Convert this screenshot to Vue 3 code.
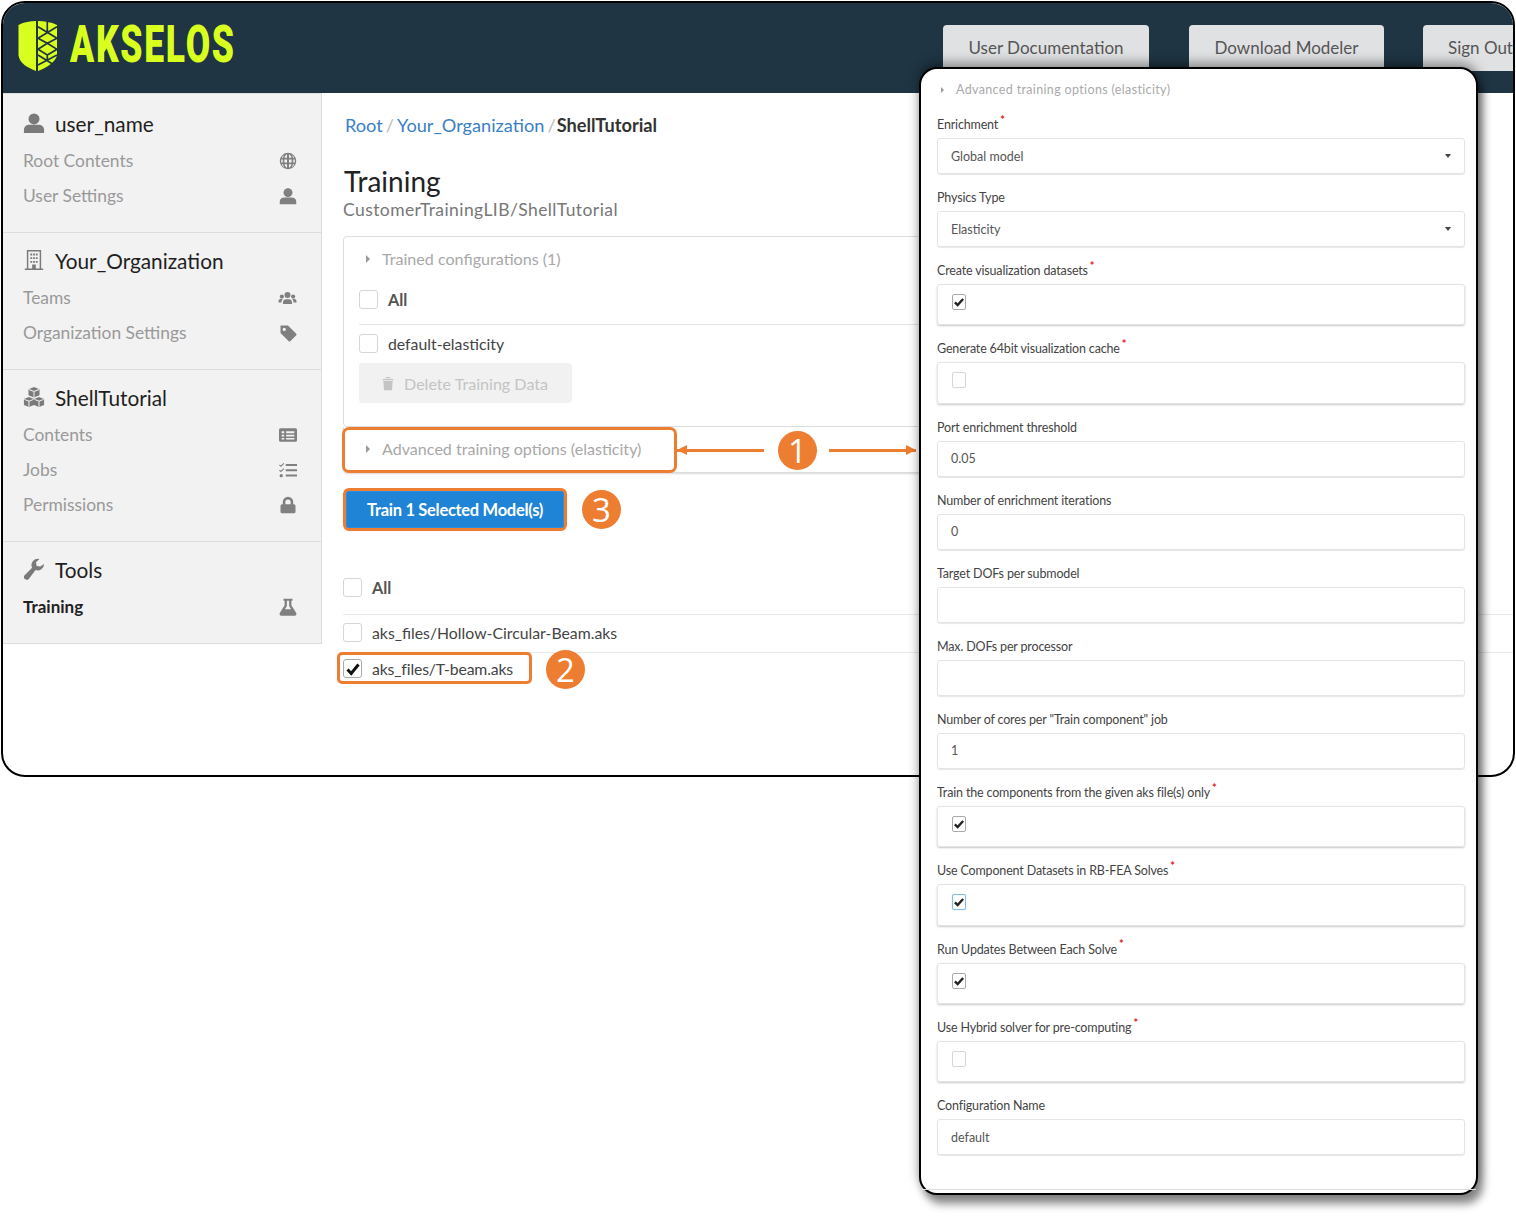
<template>
  <div class="page">
    <div class="frame">
      <header class="topbar">
        <div class="logo">
          <svg class="logo-mark" viewBox="0 0 40 52" width="40" height="52">
            <path fill="#d9ff1f" d="M0.500 5 C6 2 12 1 18 1 V51 C10 48 1 43 0.500 35 Z" />
            <path fill="#d9ff1f" d="M20 1 C26 1 33 2 39 5 V35 C38 42 28 48 20 51 Z" />
            <path fill="none" stroke="#1f3544" stroke-width="1.700" d="M29.300 1V12.500M20 6.700L39 18.300M39 6.700L20 18.300M20 18.300L29.300 23.300L39 18.300M20 29.300L29.300 23.300L39 29.300L29.300 35ZM20 35L39 46.700M39 35L20 45M29.300 35V41" />
          </svg>
          <span class="logo-text">AKSELOS</span>
        </div>
        <nav class="top-nav">
          <a class="top-btn docs">User Documentation</a>
          <a class="top-btn modeler">Download Modeler</a>
          <a class="top-btn signout">Sign Out</a>
        </nav>
      </header>
      <div class="body-row">
        <aside class="sidebar">
          <section v-for="sec in sections" :key="sec.title" class="side-sec">
            <div class="side-head">
              <svg class="head-ico" viewBox="0 0 24 24" v-html="icons[sec.icon]"></svg>
              <span>{{ sec.title }}</span>
            </div>
            <div v-for="it in sec.items" :key="it.label" class="side-item" :class="{ active: it.active }">
              <span>{{ it.label }}</span>
              <svg class="item-ico" :class="it.icon" viewBox="0 0 24 24" v-html="icons[it.icon]"></svg>
            </div>
          </section>
        </aside>
        <main class="content">
          <div class="crumbs">
            <a>Root</a><span class="sep">/</span><a>Your_Organization</a><span class="sep">/</span><b>ShellTutorial</b>
          </div>
          <h1>Training</h1>
          <div class="subtitle">CustomerTrainingLIB/ShellTutorial</div>

          <div class="box trained">
            <div class="acc-title"><i class="caret"></i>Trained configurations (1)</div>
            <div class="check-row all-row"><span class="cb"></span><span class="all">All</span></div>
            <div class="check-row"><span class="cb"></span><span>default-elasticity</span></div>
            <button class="delete-btn">
              <svg viewBox="0 0 24 24" width="16" height="18"><path fill="#c4c4c4" d="M4 6h16v2H4zM9 3h6l1 2H8zM5 9h14l-1 14H6z" /></svg>
              Delete Training Data
            </button>
          </div>
          <div class="box advanced">
            <div class="acc-title"><i class="caret"></i>Advanced training options (elasticity)</div>
            <span class="hl hl-adv"></span>
          </div>

          <div class="train-wrap">
            <button class="train-btn">Train 1 Selected Model(s)</button>
            <span class="badge">3</span>
          </div>

          <div class="files">
            <div class="file-row first"><span class="cb"></span><span class="all">All</span></div>
            <div class="file-row second"><span class="cb"></span><span>aks_files/Hollow-Circular-Beam.aks</span></div>
            <div class="file-row last">
              <span class="cb checked">
                <svg viewBox="0 0 16 16" width="16" height="16"><path d="M2.500 8.500 L6.200 12.500 L13.500 3.500" fill="none" stroke="#111" stroke-width="3" /></svg>
              </span>
              <span class="tbeam">aks_files/T-beam.aks</span>
              <span class="hl hl-file"></span>
              <span class="badge badge-file">2</span>
            </div>
          </div>
        </main>
      </div>
    </div>

    <!-- callout: arrows pointing from the section to the floating panel -->
    <div class="callout">
      <span class="arrow left"></span>
      <span class="badge">1</span>
      <span class="arrow right"></span>
    </div>

    <div class="panel">
      <div class="panel-title"><i class="caret small"></i>Advanced training options (elasticity)</div>
      <div v-for="f in fields" :key="f.label" class="field">
        <label>{{ f.label }}<sup v-if="f.req">*</sup></label>
        <div v-if="f.type === 'check'" class="control check-control">
          <span class="cb tiny" :class="{ checked: f.value, focus: f.focus }">
            <svg v-if="f.value" viewBox="0 0 16 16" width="12" height="12"><path d="M2.500 8.500 L6.200 12 L13.500 4" fill="none" stroke="#222" stroke-width="3.200" /></svg>
          </span>
        </div>
        <div v-else class="control">
          <span>{{ f.value }}</span>
          <i v-if="f.type === 'select'" class="drop"></i>
        </div>
      </div>
      <div class="panel-foot"></div>
    </div>
  </div>
</template>

<script setup>
const user = '<circle cx="12" cy="7.500" r="6"/><path d="M1 23v-3.500c0-3.500 3-5.500 6-5.500h10c3 0 6 2 6 5.500V23z"/>'
const icons = {
  user,
  building: '<path fill="none" stroke="currentColor" stroke-width="1.600" d="M5 2h14v20H5zM2 22.200h20"/><path d="M8 5h2v2H8zM11 5h2v2h-2zM14 5h2v2h-2zM8 9h2v2H8zM11 9h2v2h-2zM14 9h2v2h-2zM8 13h2v2H8zM11 13h2v2h-2zM14 13h2v2h-2zM10 17h4v5h-4z"/>',
  cubes: '<path d="M12 1l6 2.500v6.500L12 12.500 6 10V3.500zM6.500 12l5.500 2.300v6.500L6.500 23 1 20.800v-6.500zM17.500 12l5.500 2.300v6.500L17.500 23 12 20.800v-6.500z"/><path fill="none" stroke="#f2f2f2" stroke-width="1.100" d="M6.500 3.800L12 6l5.500-2.200M12 6v6M1.500 14.600l5 2 5-2M6.500 16.600v6M12.500 14.600l5 2 5-2M17.500 16.600v6"/>',
  wrench: '<path d="M23 6.500a7 7 0 0 1-9.300 6.600L6.500 22.500a3 3 0 0 1-5-3.300l8.400-8.500A7 7 0 0 1 18 1l-3.800 3.700.7 3.900 3.900.7z"/>',
  globe: '<path d="M12 1a11 11 0 1 0 0 22 11 11 0 0 0 0-22zm-1.300 2v4.700H7.400C8 5.400 9.200 3.600 10.700 3zm2.600 0c1.500.6 2.700 2.400 3.300 4.700h-3.300zM5.300 7.700H3.600A9 9 0 0 1 7 3.800c-.8 1-1.300 2.400-1.700 3.900zm13.400 0c-.4-1.500-.9-2.900-1.700-3.900a9 9 0 0 1 3.400 3.900zM3 10h2v4H3zm4.200 0h3.500v4H7.200zm6.100 0h3.500v4h-3.500zm5.700 0h2v4h-2zM3.600 16.300h1.700c.4 1.500.9 2.900 1.700 3.900a9 9 0 0 1-3.400-3.900zm3.800 0h3.300V21c-1.500-.6-2.700-2.400-3.300-4.700zm5.900 0h3.300c-.6 2.300-1.800 4.100-3.300 4.700zm5.400 0h1.700a9 9 0 0 1-3.400 3.900c.8-1 1.300-2.400 1.700-3.900z"/>',
  users: '<circle cx="12" cy="8" r="4"/><circle cx="4.500" cy="10" r="2.800"/><circle cx="19.500" cy="10" r="2.800"/><path d="M6 20v-2.500c0-2.500 2-4 4-4h4c2 0 4 1.500 4 4V20zM0 18v-2c0-1.500 1.500-3 3-3h3c-1.200 1-2 2.500-2 5zM24 18v-2c0-1.500-1.500-3-3-3h-3c1.200 1 2 2.500 2 5z"/>',
  tag: '<path d="M2 2h10l11 11c.6.6.6 1.400 0 2l-8 8c-.6.600-1.400.600-2 0L2 12zm5 3a2.200 2.200 0 1 0 0 4.400A2.200 2.200 0 0 0 7 5z" fill-rule="evenodd"/>',
  list: '<path fill-rule="evenodd" d="M2 3h20a2 2 0 0 1 2 2v14a2 2 0 0 1-2 2H2a2 2 0 0 1-2-2V5a2 2 0 0 1 2-2zm1.500 4v2.500h3.500V7zm6 0v2.500h11V7zm-6 4.500V14h3.500v-2.500zm6 0V14h11v-2.500zm-6 4.500v2h3.500v-2zm6 0v2h11v-2z"/>',
  tasks: '<path d="M9 4h15v2.500H9zM9 11h15v2.500H9zM9 18h15v2.500H9z"/><path d="M1 4.500l1.500 1.500L6 2.500l1 1L2.500 8 0 5.500zM1 11.500l1.500 1.500L6 9.500l1 1L2.500 15 0 12.500z"/><circle cx="3" cy="19.500" r="2.200"/>',
  lock: '<path fill-rule="evenodd" d="M12 1a7 7 0 0 1 7 7v3h1a2 2 0 0 1 2 2v8a2 2 0 0 1-2 2H4a2 2 0 0 1-2-2v-8a2 2 0 0 1 2-2h1V8a7 7 0 0 1 7-7zm0 3.500A3.500 3.500 0 0 0 8.500 8v3h7V8A3.500 3.500 0 0 0 12 4.500z"/>',
  flask: '<path fill-rule="evenodd" d="M6 1h12v2.500h-1.500v6L23 20c.8 1.600-.2 3.500-2 3.500H3c-1.800 0-2.800-1.900-2-3.500L7.500 9.500v-6H6zm4.500 2.500v7L7.800 15h8.400l-2.700-4.500v-7z"/>'
}

const sections = [
  { title: 'user_name', icon: 'user', items: [
    { label: 'Root Contents', icon: 'globe' },
    { label: 'User Settings', icon: 'user' }
  ] },
  { title: 'Your_Organization', icon: 'building', items: [
    { label: 'Teams', icon: 'users' },
    { label: 'Organization Settings', icon: 'tag' }
  ] },
  { title: 'ShellTutorial', icon: 'cubes', items: [
    { label: 'Contents', icon: 'list' },
    { label: 'Jobs', icon: 'tasks' },
    { label: 'Permissions', icon: 'lock' }
  ] },
  { title: 'Tools', icon: 'wrench', items: [
    { label: 'Training', icon: 'flask', active: true }
  ] }
]

const fields = [
  { label: 'Enrichment', req: true, type: 'select', value: 'Global model' },
  { label: 'Physics Type', type: 'select', value: 'Elasticity' },
  { label: 'Create visualization datasets', req: true, type: 'check', value: true },
  { label: 'Generate 64bit visualization cache', req: true, type: 'check', value: false },
  { label: 'Port enrichment threshold', type: 'text', value: '0.05' },
  { label: 'Number of enrichment iterations', type: 'text', value: '0' },
  { label: 'Target DOFs per submodel', type: 'text', value: '' },
  { label: 'Max. DOFs per processor', type: 'text', value: '' },
  { label: 'Number of cores per "Train component" job', type: 'text', value: '1' },
  { label: 'Train the components from the given aks file(s) only', req: true, type: 'check', value: true },
  { label: 'Use Component Datasets in RB-FEA Solves', req: true, type: 'check', value: true, focus: true },
  { label: 'Run Updates Between Each Solve', req: true, type: 'check', value: true },
  { label: 'Use Hybrid solver for pre-computing', req: true, type: 'check', value: false },
  { label: 'Configuration Name', type: 'text', value: 'default' }
]
</script>

<style>
html, body { margin: 0; background: #fff; }
</style>

<style scoped>
.page {
  position: relative;
  width: 1516px;
  height: 1217px;
  overflow: hidden;
  font-family: Lato, "Noto Sans", sans-serif;
  color: #333;
}
.frame {
  box-sizing: border-box;
  position: relative;
  margin: 1px 0 0 1px;
  width: 1514px;
  height: 776px;
  border: 2px solid #000;
  border-radius: 24px;
  overflow: hidden;
  background: #fff;
}
.topbar {
  height: 90px;
  background: #1f3544;
  display: flex;
  justify-content: space-between;
}
.logo { display: flex; align-items: flex-start; padding: 17px 0 0 15px; }
.logo-mark { display: block; flex: none; }
.logo-text {
  display: inline-block;
  margin-left: 12px;
  font-family: Roboto, sans-serif;
  font-weight: 900;
  font-size: 51px;
  line-height: 50px;
  letter-spacing: 2.500px;
  color: #d9ff1f;
  transform: scaleX(0.695);
  transform-origin: left center;
}
.top-nav { display: flex; align-items: flex-start; padding-top: 22px; }
.top-btn {
  box-sizing: border-box;
  height: 46px;
  padding-top: 12px;
  background: #e0e1e3;
  border-radius: 4px 4px 0 0;
  color: #555;
  font-size: 17px;
  text-align: center;
}
.docs { width: 206px; margin-right: 40px; }
.modeler { width: 195px; margin-right: 39px; }
.signout { width: 90px; padding-left: 25px; text-align: left; white-space: nowrap; overflow: hidden; border-radius: 4px 0 0 0; }

.body-row { display: flex; align-items: flex-start; }
.sidebar {
  box-sizing: border-box;
  width: 319px;
  flex: none;
  background: #f2f2f2;
  border-right: 1px solid #ddd;
  border-bottom: 1px solid #ddd;
  border-top: 1px solid #ddd;
}
.side-sec { padding: 15px 20px 19px; border-bottom: 1px solid #ddd; }
.side-sec:first-child { padding-top: 17px; }
.side-sec:last-child { border-bottom: 0; }
.side-head {
  display: flex;
  align-items: center;
  gap: 10px;
  height: 24px;
  margin-bottom: 8px;
  font-size: 20.800px;
  color: #1f1f1f;
}
.head-ico { width: 22px; height: 22px; fill: #7a7a7a; color: #7a7a7a; flex: none; }
.side-item {
  display: flex;
  align-items: center;
  justify-content: space-between;
  height: 35px;
  padding-right: 4px;
  font-size: 17.400px;
  color: #999;
}
.side-item.active { color: #222; font-weight: 700; font-size: 17px; }
.item-ico { width: 18px; height: 18px; fill: #808080; color: #808080; }
.item-ico.users { width: 23px; margin-right: -2px; }

.content { flex: 1; min-width: 0; padding: 20px 0 0 21px; }
.crumbs { padding-left: 2px; font-size: 18.200px; line-height: 24px; color: #3a3a3a; }
.crumbs a { color: #3a7fc4; }
.crumbs b { font-weight: 700; color: #333; margin-left: -2px; }
.sep { color: #bbb; margin: 0 3px; }
h1 { margin: 26px 0 0; padding-left: 1px; font-size: 28px; line-height: 36px; font-weight: 400; color: #222; }
.subtitle { font-size: 17.500px; letter-spacing: 0.420px; line-height: 22px; color: #777; }

.box { position: relative; border: 1px solid #ddd; width: 620px; }
.trained {
  box-sizing: border-box;
  height: 191px;
  margin-top: 15px;
  padding: 12px 15px;
  border-radius: 4px 0 0 4px;
}
.advanced {
  box-sizing: border-box;
  height: 46px;
  padding: 12px 15px;
  border-top: 0;
  border-radius: 0 0 0 4px;
  box-shadow: 0 1px 2px rgba(0,0,0,.15);
}
.acc-title { font-size: 16.100px; line-height: 20px; color: #a8a8a8; display: flex; align-items: center; }
.caret {
  width: 0;
  height: 0;
  margin: 0 12px 0 7px;
  border-left: 4px solid #9a9a9a;
  border-top: 4px solid transparent;
  border-bottom: 4px solid transparent;
}
.caret.small { margin: 0 12px 0 4px; border-left-width: 3px; border-top-width: 3px; border-bottom-width: 3px; }

.cb {
  box-sizing: border-box;
  display: inline-flex;
  align-items: center;
  justify-content: center;
  width: 19px;
  height: 19px;
  flex: none;
  border: 1px solid #d6d6d6;
  border-radius: 3px;
  background: #fff;
}
.cb.checked { border-color: #aaa; }
.cb.focus { border-color: #86bfe6; box-shadow: 0 0 1px #86bfe6; }
.check-row { display: flex; align-items: center; gap: 10px; font-size: 15.800px; color: #444; }
.all { font-weight: 700; color: #555; font-size: 16.300px; }
.all-row { height: 45px; margin-top: 11px; border-bottom: 1px solid #e4e4e4; box-sizing: border-box; padding-bottom: 6px; }
.all-row + .check-row { height: 37px; }
.delete-btn {
  display: flex;
  align-items: center;
  gap: 8px;
  width: 213px;
  height: 40px;
  margin-top: 1px;
  padding: 0 0 0 21px;
  border: 0;
  border-radius: 4px;
  background: #f1f1f1;
  color: #c4c4c4;
  font: 400 16.100px Lato, sans-serif;
}

.hl {
  position: absolute;
  box-sizing: border-box;
  border: 3px solid #ed7d31;
  border-radius: 5px;
  pointer-events: none;
}
.hl-adv { left: -2px; top: 0; width: 335px; height: 46px; border-radius: 7px; }
.hl-file { left: -6px; top: -1px; width: 195px; height: 32px; }

.train-wrap { display: flex; align-items: center; gap: 15px; margin-top: 15px; }
.train-btn {
  box-sizing: border-box;
  width: 224px;
  height: 43px;
  border: 3px solid #ed7d31;
  border-radius: 6px;
  box-shadow: inset 0 0 0 1px #2a8fe0;
  background: #1f84d6;
  color: #fff;
  font: 700 16.500px Lato, sans-serif;
  letter-spacing: -0.3px;
}
.badge {
  display: inline-flex;
  align-items: center;
  justify-content: center;
  width: 39px;
  height: 39px;
  border-radius: 50%;
  background: #ed7d31;
  color: #fff;
  font: 400 33px "Open Sans", "Noto Sans", sans-serif;
  flex: none;
}
.files { margin-top: 36px; font-size: 15.800px; color: #444; }
.file-row {
  position: relative;
  display: flex;
  align-items: center;
  gap: 10px;
  height: 38px;
  box-sizing: border-box;
  border-bottom: 1px solid #e9e9e9;
}
.file-row.first { height: 48px; padding-bottom: 7px; }
.file-row.second { padding-bottom: 3px; }
.file-row.last { border-bottom: 0; height: 31px; }
.tbeam { letter-spacing: -0.150px; }
.badge-file { position: absolute; left: 203px; top: -3px; }

.callout {
  position: absolute;
  left: 677px;
  top: 431px;
  width: 241px;
  height: 39px;
}
.callout .badge { position: absolute; left: 101px; top: 0; }
.arrow { position: absolute; top: 18px; height: 3px; width: 87px; background: #ed7d31; }
.arrow::after {
  content: "";
  position: absolute;
  top: -4px;
  border-top: 5px solid transparent;
  border-bottom: 5px solid transparent;
}
.arrow.left { left: 0; }
.arrow.left::after { left: 0; border-right: 10px solid #ed7d31; }
.arrow.right { left: 152px; }
.arrow.right::after { right: 0; border-left: 10px solid #ed7d31; }

.panel {
  box-sizing: border-box;
  position: absolute;
  left: 919px;
  top: 67px;
  width: 559px;
  height: 1128px;
  padding: 12px 11px 0 16px;
  background: #fff;
  border: 2px solid #000;
  border-radius: 18px;
  box-shadow: 5px 9px 8px rgba(0,0,0,.45), 0 -4px 12px rgba(0,0,0,.4);
}
.panel-title {
  display: flex;
  align-items: center;
  height: 17px;
  font-size: 12.500px;
  color: #aaa;
  margin-bottom: 9px;
  letter-spacing: 0.350px;
}
.field label {
  display: block;
  height: 18px;
  margin-bottom: 4px;
  padding-top: 15px;
  font-size: 12.500px;
  line-height: 18px;
  letter-spacing: -0.160px;
  color: #444;
}
.panel-title + .field label { padding-top: 9px; }
.field sup { color: #e02020; font-size: 11px; font-weight: 700; line-height: 0; margin-left: 2px; }
.control {
  box-sizing: border-box;
  height: 36px;
  display: flex;
  align-items: center;
  justify-content: space-between;
  padding: 0 13px;
  border: 1px solid #e4e4e4;
  border-radius: 3px;
  box-shadow: 0 1px 1px rgba(0,0,0,.1);
  font-size: 12.500px;
  color: #555;
}
.check-control {
  height: 41.400px;
  align-items: flex-start;
  padding: 9px 14px 0;
  box-shadow: 0 1px 2px rgba(0,0,0,.22);
}
.cb.tiny { width: 14px; height: 16px; border-radius: 2px; }
.drop {
  width: 0;
  height: 0;
  border-top: 4px solid #444;
  border-left: 3.500px solid transparent;
  border-right: 3.500px solid transparent;
}
.panel-foot {
  position: absolute;
  left: 0;
  right: 0;
  bottom: 3px;
  border-top: 1px solid #ddd;
}
</style>
